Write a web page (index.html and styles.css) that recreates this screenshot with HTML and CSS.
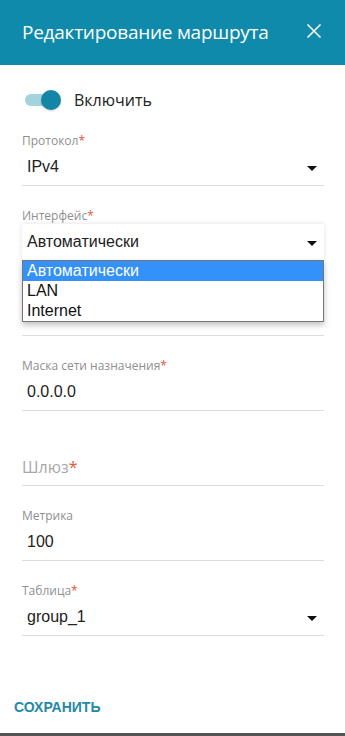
FILE: index.html
```html
<!DOCTYPE html>
<html lang="ru">
<head>
    <meta charset="UTF-8">
    <meta name="viewport" content="width=device-width, initial-scale=1.0">
    <title>Редактирование маршрута</title>
    <link rel="stylesheet" href="styles.css">
</head>
<body>

    <div class="dialog">
        <!-- Header -->
        <header class="dialog-header">
            <h1 class="dialog-title">Редактирование маршрута</h1>
            <button class="close-btn" aria-label="Закрыть">
                <svg width="16" height="16" viewBox="0 0 16 16">
                    <path d="M1.5 1.5 L14.5 14.5 M14.5 1.5 L1.5 14.5" stroke="#fff" stroke-width="1.6" fill="none"/>
                </svg>
            </button>
        </header>

        <main class="dialog-body">
            <!-- Enable switch -->
            <div class="switch-row">
                <span class="switch">
                    <span class="switch-track"></span>
                    <span class="switch-knob"></span>
                </span>
                <span class="switch-label">Включить</span>
            </div>

            <div class="field">
                <div class="field-label">Протокол<span class="req">*</span></div>
                <div class="field-row">
                    <span class="field-value">IPv4</span>
                    <span class="arrow"></span>
                </div>
            </div>

            <div class="field field-open">
                <div class="field-label">Интерфейс<span class="req">*</span></div>
                <div class="field-row focused">
                    <span class="field-value">Автоматически</span>
                    <span class="arrow"></span>
                </div>
                <!-- Native dropdown list -->
                <ul class="dropdown">
                    <li class="selected">Автоматически</li>
                    <li>LAN</li>
                    <li>Internet</li>
                </ul>
            </div>

            <!-- Field hidden under the dropdown -->
            <div class="field">
                <div class="field-label"></div>
                <div class="field-row"></div>
            </div>

            <div class="field">
                <div class="field-label">Маска сети назначения<span class="req">*</span></div>
                <div class="field-row">
                    <span class="field-value">0.0.0.0</span>
                </div>
            </div>

            <div class="field">
                <div class="field-label"></div>
                <div class="field-row">
                    <span class="placeholder">Шлюз<span class="req">*</span></span>
                </div>
            </div>

            <div class="field">
                <div class="field-label">Метрика</div>
                <div class="field-row">
                    <span class="field-value">100</span>
                </div>
            </div>

            <div class="field">
                <div class="field-label">Таблица<span class="req">*</span></div>
                <div class="field-row">
                    <span class="field-value">group_1</span>
                    <span class="arrow"></span>
                </div>
            </div>
        </main>

        <footer class="dialog-footer">
            <button class="save-btn">СОХРАНИТЬ</button>
        </footer>
    </div>

    <div class="bottom-edge"></div>

</body>
</html>
```

FILE: styles.css
```css
/* General Layout */
body {
    margin: 0;
    font-family: 'Open Sans', 'Noto Sans', sans-serif;
    background-color: #fff;
    color: #222;
}

.dialog {
    height: 733px;
    display: flex;
    flex-direction: column;
}

/* Header */
.dialog-header {
    height: 65px;
    background-color: #0f8aab;
    display: flex;
    align-items: center;
    justify-content: space-between;
    padding: 0 22px 0 22px;
    flex-shrink: 0;
}

.dialog-title {
    margin: 0;
    color: #fff;
    font-size: 19px;
    font-weight: 400;
    letter-spacing: -0.25px;
    padding-bottom: 2px;
}

.close-btn {
    background: none;
    border: none;
    padding: 0;
    margin-right: 1px;
    margin-bottom: 3px;
    width: 16px;
    height: 16px;
    cursor: pointer;
}

.close-btn svg {
    display: block;
}

/* Body */
.dialog-body {
    padding: 0 21px 0 22px;
    flex: 1;
}

.switch-row {
    display: flex;
    align-items: center;
    height: 20px;
    margin-top: 25px;
    margin-bottom: 23px;
}

.switch {
    position: relative;
    width: 40px;
    height: 20px;
    margin-left: 3px;
}

.switch-track {
    position: absolute;
    left: 0;
    top: 4px;
    width: 34px;
    height: 12px;
    border-radius: 6px;
    background-color: #a3d3df;
}

.switch-knob {
    position: absolute;
    left: 16px;
    top: 0;
    width: 20px;
    height: 20px;
    border-radius: 50%;
    background-color: #1386a8;
    box-shadow: 0 1px 2px rgba(0, 0, 0, 0.2);
}

.switch-label {
    margin-left: 9px;
    font-size: 16px;
    color: #222;
}

/* Fields */
.field {
    position: relative;
    margin-bottom: 22px;
}

.field-label {
    height: 16px;
    line-height: 16px;
    font-size: 12px;
    color: #8f8f8f;
}

.req {
    color: #e0553b;
}

.field-row {
    height: 36px;
    display: flex;
    align-items: center;
    justify-content: space-between;
    border-bottom: 1px solid #dcdcdc;
}

.field-row.focused {
    box-shadow: 0 0 5px rgba(0, 0, 0, 0.12);
    border-bottom-color: transparent;
}

.field-value {
    font-family: 'Liberation Sans', Arial, sans-serif;
    font-size: 16px;
    color: #222;
    padding-left: 5px;
}

.placeholder {
    font-size: 16px;
    color: #a8a8a8;
}

.arrow {
    width: 0;
    height: 0;
    border-left: 5px solid transparent;
    border-right: 5px solid transparent;
    border-top: 5px solid #111;
    margin-right: 7px;
    margin-top: 3px;
}

/* Dropdown list (overlay) */
.dropdown {
    position: absolute;
    left: 0;
    right: 0;
    top: 52px;
    margin: 0;
    padding: 0;
    list-style: none;
    background-color: #fff;
    border: 1px solid #767676;
    box-shadow: 0 3px 6px rgba(0, 0, 0, 0.25);
    z-index: 2;
}

.dropdown li {
    height: 20px;
    line-height: 20px;
    padding-left: 4px;
    font-family: 'Liberation Sans', Arial, sans-serif;
    font-size: 16px;
    color: #111;
}

.dropdown li.selected {
    background-color: #3391f7;
    color: #fff;
}

/* Footer */
.dialog-footer {
    padding: 0 14px 16px 14px;
}

.save-btn {
    background: none;
    border: none;
    padding: 0;
    font-family: 'Liberation Sans', Arial, sans-serif;
    font-weight: 700;
    font-size: 14px;
    color: #1f8aa9;
    cursor: pointer;
}

.bottom-edge {
    height: 3px;
    background-color: #555;
}
```
